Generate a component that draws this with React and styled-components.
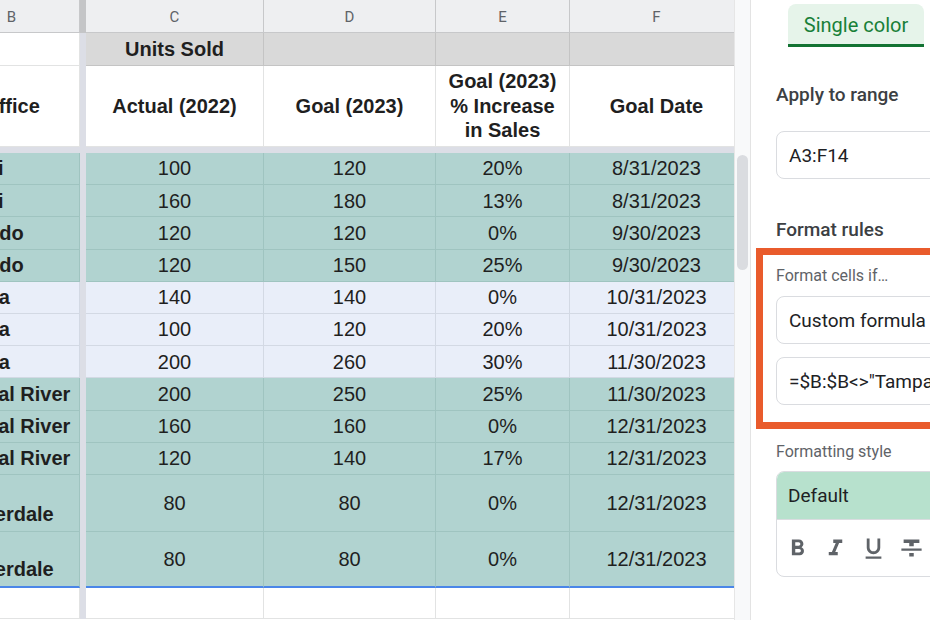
import React from "react";
import styled, { createGlobalStyle } from "styled-components";
import {
  MdFormatBold,
  MdFormatItalic,
  MdFormatUnderlined,
  MdFormatStrikethrough
} from "react-icons/md";

const GlobalStyle = createGlobalStyle`
  * { box-sizing: border-box; }
  html, body { margin: 0; padding: 0; height: 620px; overflow: hidden; background: #fff; }
  #root { height: 620px; }
`;

const COLS = "136px 6px 178px 172px 134px 174px";

const tones = {
  head: { bg: "#eeeff1", line: "#c7c8ca" },
  gray: { bg: "#d9d9d9", line: "#c4c4c4" },
  white: { bg: "#ffffff", line: "#e2e3e3" },
  teal: { bg: "#b1d3d0", line: "#9fc4c0" },
  light: { bg: "#e9eef9", line: "#d3d9e4" }
};

const Page = styled.div`
  display: flex;
  width: 930px;
  height: 620px;
  overflow: hidden;
`;

const Viewport = styled.div`
  width: 734px;
  flex-shrink: 0;
  overflow: hidden;
`;

const Sheet = styled.div`
  margin-left: -56px;
  display: flex;
  flex-direction: column;
  font-family: "Liberation Sans", Arial, sans-serif;
  font-size: 20px;
  color: #1f1f1f;
`;

const Row = styled.div`
  display: grid;
  grid-template-columns: ${COLS};
  height: ${p => p.$h}px;
  flex-shrink: 0;
`;

const Cell = styled.div`
  display: flex;
  align-items: ${p => p.$valign || "center"};
  justify-content: ${p =>
    p.$align === "left" ? "flex-start" : "center"};
  text-align: ${p => p.$align || "center"};
  padding: 0 3px ${p => (p.$valign === "flex-end" ? "4px" : "0")};
  line-height: 1.22;
  background: ${p => tones[p.$tone].bg};
  border-right: 1px solid ${p => tones[p.$tone].line};
  border-bottom: ${p =>
    p.$blue ? "2px solid #4a86e8" : `1px solid ${tones[p.$tone].line}`};
  font-weight: ${p => (p.$bold ? 700 : 400)};
  overflow: hidden;
`;

const Letter = styled(Cell)`
  font-family: Roboto, "Liberation Sans", sans-serif;
  font-size: 15px;
  color: #5f6368;
  padding-top: 2px;
`;

const Freeze = styled.div`
  background: ${p => (p.$dark ? "#c4c5c7" : "#dcdee6")};
`;

const FreezeRow = styled.div`
  height: 6px;
  flex-shrink: 0;
  background: #dcdee6;
`;

const Scrollbar = styled.div`
  width: 16px;
  flex-shrink: 0;
  background: #f8f9fa;
  border-left: 1px solid #e6e6e6;
  padding: 155px 2px 0 2px;
`;

const Thumb = styled.div`
  height: 115px;
  border-radius: 6px;
  background: #dadce0;
`;

const Panel = styled.aside`
  flex: 1;
  border-left: 1px solid #e3e3e3;
  overflow: hidden;
  font-family: Roboto, "Liberation Sans", sans-serif;
  color: #202124;
`;

const PanelInner = styled.div`
  width: 340px;
  padding: 4px 0 0 25px;
  display: flex;
  flex-direction: column;
`;

const TabBar = styled.div`
  display: flex;
  padding-left: 12px;
`;

const Tab = styled.div`
  width: 136px;
  height: 43px;
  border-radius: 8px 8px 0 0;
  background: #e6f4ea;
  border-bottom: 3px solid #137333;
  color: #188038;
  font-size: 20px;
  display: flex;
  align-items: center;
  justify-content: center;
  padding-top: 2px;
`;

const SectionTitle = styled.div`
  font-size: 19px;
  font-weight: 500;
  color: #3c4043;
  line-height: 24px;
  margin-top: ${p => p.$mt}px;
`;

const Label = styled.div`
  font-size: 16px;
  color: #5f6368;
  line-height: 18px;
  margin-top: ${p => p.$mt || 0}px;
`;

const Field = styled.div`
  height: 48px;
  border: 1px solid #dadce0;
  border-radius: 8px;
  padding-left: 12px;
  display: flex;
  align-items: center;
  font-size: 19px;
  color: #202124;
  margin-top: ${p => p.$mt}px;
  white-space: nowrap;
`;

const Highlight = styled.div`
  margin: 6px 0 0 -20px;
  border: 7px solid #e95b2c;
  padding: 12px 0 17px 13px;
  display: flex;
  flex-direction: column;
`;

const StyleBox = styled.div`
  margin-top: 10px;
  border: 1px solid #dadce0;
  border-radius: 8px;
  overflow: hidden;
`;

const Preview = styled.div`
  height: 48px;
  background: #b7e1cd;
  padding-left: 11px;
  display: flex;
  align-items: center;
  font-size: 19px;
  color: #202124;
  border-bottom: 1px solid #dadce0;
`;

const Toolbar = styled.div`
  height: 56px;
  display: flex;
  align-items: center;
  gap: 11px;
  padding-left: 7px;
  color: #5f6368;
`;

const data = [
  ["Miami", 100, 120, "20%", "8/31/2023", "teal"],
  ["Miami", 160, 180, "13%", "8/31/2023", "teal"],
  ["Orlando", 120, 120, "0%", "9/30/2023", "teal"],
  ["Orlando", 120, 150, "25%", "9/30/2023", "teal"],
  ["Tampa", 140, 140, "0%", "10/31/2023", "light"],
  ["Tampa", 100, 120, "20%", "10/31/2023", "light"],
  ["Tampa", 200, 260, "30%", "11/30/2023", "light"],
  ["Crystal River", 200, 250, "25%", "11/30/2023", "teal"],
  ["Crystal River", 160, 160, "0%", "12/31/2023", "teal"],
  ["Crystal River", 120, 140, "17%", "12/31/2023", "teal"],
  ["Fort Lauderdale", 80, 80, "0%", "12/31/2023", "teal", 57],
  ["Fort Lauderdale", 80, 80, "0%", "12/31/2023", "teal", 56, true]
];

const DataRow = ({ row }) => {
  const [office, actual, goal, pct, date, tone, h = 32.2, last] = row;
  const tall = h > 40;
  return (
    <Row $h={h}>
      <Cell
        $tone={tone}
        $bold
        $align="left"
        $valign={tall ? "flex-end" : "center"}
        $blue={last}
      >
        {office}
      </Cell>
      <Freeze />
      <Cell $tone={tone} $blue={last}>{actual}</Cell>
      <Cell $tone={tone} $blue={last}>{goal}</Cell>
      <Cell $tone={tone} $blue={last}>{pct}</Cell>
      <Cell $tone={tone} $blue={last}>{date}</Cell>
    </Row>
  );
};

const App = () => (
  <Page>
    <GlobalStyle />
    <Viewport>
      <Sheet>
        <Row $h={33}>
          <Letter $tone="head">B</Letter>
          <Freeze $dark />
          <Letter $tone="head">C</Letter>
          <Letter $tone="head">D</Letter>
          <Letter $tone="head">E</Letter>
          <Letter $tone="head">F</Letter>
        </Row>
        <Row $h={33}>
          <Cell $tone="white" />
          <Freeze />
          <Cell $tone="gray" $bold>Units Sold</Cell>
          <Cell $tone="gray" />
          <Cell $tone="gray" />
          <Cell $tone="gray" />
        </Row>
        <Row $h={81}>
          <Cell $tone="white" $bold>Office</Cell>
          <Freeze />
          <Cell $tone="white" $bold>Actual (2022)</Cell>
          <Cell $tone="white" $bold>Goal (2023)</Cell>
          <Cell $tone="white" $bold>
            Goal (2023)
            <br />% Increase
            <br />in Sales
          </Cell>
          <Cell $tone="white" $bold>Goal Date</Cell>
        </Row>
        <FreezeRow />
        {data.map((row, i) => (
          <DataRow key={i} row={row} />
        ))}
        <Row $h={31}>
          <Cell $tone="white" />
          <Freeze />
          <Cell $tone="white" />
          <Cell $tone="white" />
          <Cell $tone="white" />
          <Cell $tone="white" />
        </Row>
      </Sheet>
    </Viewport>
    <Scrollbar>
      <Thumb />
    </Scrollbar>
    <Panel>
      <PanelInner>
        <TabBar>
          <Tab>Single color</Tab>
        </TabBar>
        <SectionTitle $mt={36}>Apply to range</SectionTitle>
        <Field $mt={24}>A3:F14</Field>
        <SectionTitle $mt={39}>Format rules</SectionTitle>
        <Highlight>
          <Label>Format cells if…</Label>
          <Field $mt={11}>Custom formula is</Field>
          <Field $mt={13}>=$B:$B&lt;&gt;"Tampa"</Field>
        </Highlight>
        <Label $mt={14}>Formatting style</Label>
        <StyleBox>
          <Preview>Default</Preview>
          <Toolbar>
            <MdFormatBold size={27} />
            <MdFormatItalic size={27} />
            <MdFormatUnderlined size={27} />
            <MdFormatStrikethrough size={27} />
          </Toolbar>
        </StyleBox>
      </PanelInner>
    </Panel>
  </Page>
);

export default App;
